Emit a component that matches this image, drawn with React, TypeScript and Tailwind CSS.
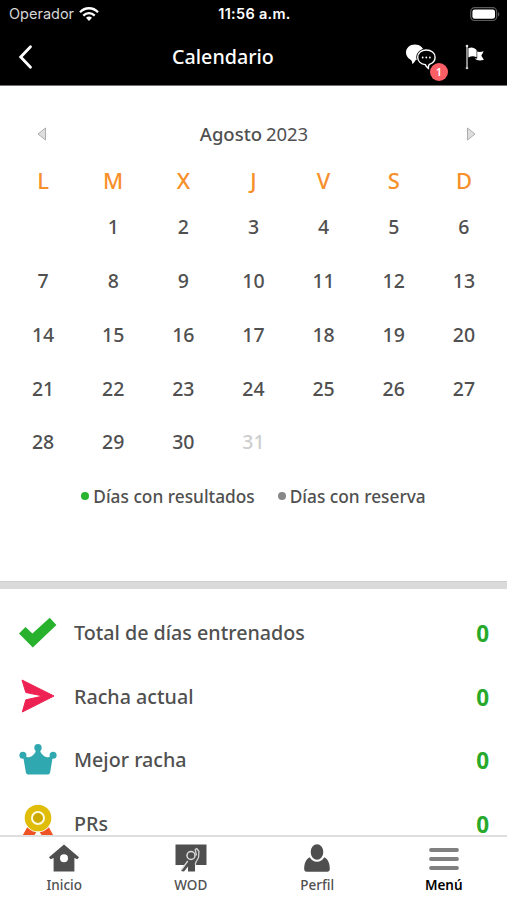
import type { ReactNode } from "react";

const weekDays = ["L", "M", "X", "J", "V", "S", "D"];

// August 2023 starts on a Tuesday
const days: (number | null)[] = [null, ...Array.from({ length: 31 }, (_, i) => i + 1)];
const today = 30;

const stats: { label: string; value: number; icon: ReactNode }[] = [
  { label: "Total de días entrenados", value: 0, icon: <CheckIcon /> },
  { label: "Racha actual", value: 0, icon: <SendIcon /> },
  { label: "Mejor racha", value: 0, icon: <CrownIcon /> },
  { label: "PRs", value: 0, icon: <MedalIcon /> },
];

const tabs: { label: string; icon: ReactNode; active?: boolean }[] = [
  { label: "Inicio", icon: <HomeIcon /> },
  { label: "WOD", icon: <BoardIcon /> },
  { label: "Perfil", icon: <UserIcon /> },
  { label: "Menú", icon: <MenuIcon />, active: true },
];

function WifiIcon() {
  return (
    <svg width="20" height="15" viewBox="0 0 20 15" fill="none" stroke="#fff" strokeWidth="2.3">
      <path d="M1 5.2C6-.1 14-.1 19 5.2" />
      <path d="M4.3 8.6c3.3-3.4 8.1-3.4 11.4 0" />
      <path d="M7 10.7c1.8-1.7 4.2-1.7 6 0l-3 3.2z" fill="#fff" stroke="none" />
    </svg>
  );
}

function BatteryIcon() {
  return (
    <svg width="30" height="15" viewBox="0 0 30 15">
      <rect x=".7" y=".7" width="26" height="12.8" rx="4" fill="none" stroke="#5c5c5c" strokeWidth="1.2" />
      <rect x="2.4" y="2.4" width="22.6" height="9.4" rx="2.4" fill="#fff" />
      <path d="M28 5v4.4c1.9-.8 1.9-3.6 0-4.4z" fill="#5c5c5c" />
    </svg>
  );
}

function ChatIcon() {
  return (
    <svg width="32" height="26" viewBox="0 0 32 26">
      <path
        d="M9.9.5C4.9.5 1 4 1 8.5c0 3 1.7 5.6 4.3 6.9 1.3.7 2 2 1.9 4.6 1.7-.8 2.6-2.400 3.400-3.900 5-.6 8.400-3.600 8.400-7.600C19 4 14.900.5 9.900.5z"
        fill="#fff"
      />
      <path
        d="M21.300 6c4.900 0 8.800 3.100 8.800 7.300 0 3.300-2.300 5.800-5.200 6.900-1.300.5-1.600 1.700-1.500 4.100-1.500-1-2.500-2.300-3.100-3.700-4.300-.5-7.600-3.300-7.600-7.300 0-4.200 3.700-7.300 8.600-7.300z"
        fill="#000"
        stroke="#000"
        strokeWidth="3"
      />
      <path
        d="M21.300 6c4.900 0 8.800 3.100 8.800 7.300 0 3.300-2.300 5.800-5.200 6.900-1.300.5-1.600 1.700-1.500 4.100-1.500-1-2.500-2.300-3.100-3.700-4.300-.5-7.600-3.300-7.600-7.300 0-4.200 3.700-7.300 8.600-7.300z"
        stroke="#fff"
        strokeWidth="1.400"
      />
      <g fill="#fff">
        <circle cx="17.700" cy="13.500" r=".9" />
        <circle cx="21.300" cy="13.500" r=".9" />
        <circle cx="24.900" cy="13.500" r=".9" />
      </g>
    </svg>
  );
}

function FlagIcon() {
  return (
    <svg width="20" height="26" viewBox="0 0 20 26">
      <path d="M2 2v22.500" stroke="#d4d4d4" strokeWidth="1.300" />
      <circle cx="2" cy="2" r="1.300" fill="#e5e5e5" />
      <circle cx="2" cy="24" r="1.300" fill="#c4c4c4" />
      <path d="M3.400 4.200c3-1.500 6-.7 8.200 1.800v7.300c-2.600-1.400-5.200-1.400-8.200.1z" fill="#fff" />
      <path d="M12.200 7.600c2 .6 4 .4 6.500-.3l-2.400 4.400 2.600 4c-3.600 1.300-7 1-9.200-1.200h2.500z" fill="#fff" />
    </svg>
  );
}

function CheckIcon() {
  return (
    <svg width="40" height="32" viewBox="0 0 40 32">
      <path d="M1 16.500 7.500 10l6.900 6.500L31.700.8l6.700 7.200-23.600 22.500z" fill="#27b12d" />
    </svg>
  );
}

function SendIcon() {
  return (
    <svg width="34" height="34" viewBox="0 0 34 34">
      <path d="M1 1 33 17 1.300 33l3.500-12.200L22 17 4.800 13.500z" fill="#ee2252" stroke="#ee2252" strokeLinejoin="round" />
    </svg>
  );
}

function CrownIcon() {
  return (
    <svg width="38" height="32" viewBox="0 0 38 32" fill="#30a8b0">
      <circle cx="19" cy="3.800" r="3.700" />
      <circle cx="3.900" cy="11.200" r="3.500" />
      <circle cx="34.100" cy="11.200" r="3.500" />
      <path d="M4 11.500c3.500 2.500 7 2 9.300.2C16.200 9.500 17 7.500 17 5h4c0 2.500.8 4.500 3.700 6.700 2.300 1.800 5.800 2.300 9.300-.2L31.200 28c-.3 1.900-1.300 2.500-3.200 2.500H10c-1.900 0-2.900-.6-3.200-2.500z" />
    </svg>
  );
}

function MedalIcon() {
  return (
    <svg width="34" height="38" viewBox="0 0 34 38">
      <path d="M8 20 .5 33.500l6-.5L9 38l7-11zM26 20l7.500 13.500-6-.5L25 38l-7-11z" fill="#f05323" />
      <circle cx="17" cy="14" r="14.300" fill="#fff" />
      <circle cx="17" cy="14" r="13.300" fill="#e0bd09" />
      <circle cx="17" cy="14" r="6" fill="#cda900" stroke="#fffbe0" strokeWidth="2" />
    </svg>
  );
}

function HomeIcon() {
  return (
    <svg width="32" height="28" viewBox="0 0 32 28">
      <path
        d="M16 .5 31 13.200l-1.600 2.100-3-1.200v13.400H5.600V14.100l-3 1.200L1 13.200zM16 10.300a4 4 0 1 0 0 8 4 4 0 0 0 0-8z"
        fill="#4f4f4f"
        fillRule="evenodd"
      />
    </svg>
  );
}

function BoardIcon() {
  return (
    <svg width="32" height="28" viewBox="0 0 32 28">
      <path d="M.5.500h31v20.500H.5z" fill="#4f4f4f" />
      {/* coach with a raised arm in front of the board */}
      <path
        d="M6 27l6.800-9.500 5.200-1 3.600-4.500-.6-7 2.500.5 1.300 6-3.300 7.500-1.500 2.500V27.500h-7v-5L9 27.500z"
        fill="#4f4f4f"
      />
      <path
        d="M6.200 26 12.800 17M21.500 11.500l-1.300-6 1.500-1 2.300 3-.5 6-3 5.500V21"
        fill="none"
        stroke="#d4d4d4"
        strokeWidth="1.300"
        strokeLinejoin="round"
      />
      <circle cx="16" cy="11.500" r="4" fill="#4f4f4f" stroke="#dedede" strokeWidth="1.500" />
    </svg>
  );
}

function UserIcon() {
  return (
    <svg width="26" height="28" viewBox="0 0 26 28" fill="#4f4f4f">
      <ellipse cx="13" cy="8" rx="6.300" ry="7.700" />
      <path d="M5.800 13.200c1.500 2.800 4 4.500 7.200 4.500s5.700-1.700 7.200-4.500c3.800 1.900 5.600 6 5.600 11.800 0 1.600-.9 2.700-2.500 2.700H2.700C1.100 27.700.2 26.600.2 25c0-5.800 1.800-9.900 5.600-11.800z" />
    </svg>
  );
}

function MenuIcon() {
  return (
    <svg width="30" height="24" viewBox="0 0 30 24" stroke="#808080" strokeWidth="3.800" strokeLinecap="round">
      <path d="M2 4h26M2 13h26M2 22h26" />
    </svg>
  );
}

function Header() {
  return (
    <header className="flex h-[86px] shrink-0 flex-col border-b border-[#77716f] bg-black text-white">
      <div className="grid h-7 grid-cols-[1fr_auto_1fr] items-center pl-[9px] pr-[7px] font-['Inter']">
        <div className="flex items-center gap-[5px]">
          <span className="text-[14.5px] text-[#d6d6d6]">Operador</span>
          <WifiIcon />
        </div>
        <span className="text-[14.5px] font-semibold tracking-[0.3px]">11:56 a.m.</span>
        <div className="flex justify-end">
          <BatteryIcon />
        </div>
      </div>
      <div className="grid h-[57px] grid-cols-[172px_auto_1fr] items-center">
        <button className="w-fit pl-[18px]" aria-label="Atrás">
          <svg width="16" height="26" viewBox="0 0 16 26" fill="none" stroke="#fff" strokeWidth="2.8" strokeLinecap="round">
            <path d="M12.5 2.800 2.700 13l9.800 10.200" />
          </svg>
        </button>
        <h1 className="text-[19.7px] font-medium">Calendario</h1>
        <div className="flex items-center justify-end gap-7 pr-[22px]">
          <div className="relative">
            <ChatIcon />
            <span className="absolute left-[25px] top-[19.5px] flex size-[18px] items-center justify-center rounded-full bg-[#fb5f65] text-[11px] font-semibold">
              1
            </span>
          </div>
          <FlagIcon />
        </div>
      </div>
    </header>
  );
}

function MonthArrow({ flip }: { flip?: boolean }) {
  return (
    <svg className={flip ? "rotate-180" : ""} width="10" height="14" viewBox="0 0 10 14">
      <path d="M8.500 1v12L1 7z" fill="#dedede" stroke="#adadad" strokeLinejoin="round" />
    </svg>
  );
}

function Calendar() {
  return (
    <section className="h-[495px] shrink-0 px-2 pt-[31px]">
      <div className="flex h-[34px] items-center justify-between pl-[29px] pr-[23px]">
        <MonthArrow />
        <h2 className="-ml-[5px] text-[18.5px] font-medium">
          Agosto <span className="-ml-px font-normal">2023</span>
        </h2>
        <MonthArrow flip />
      </div>
      <div className="grid h-[49px] grid-cols-7 items-center pt-2.5 text-center text-[22px] font-medium text-[#f7902b]">
        {weekDays.map((day) => (
          <span key={day}>{day}</span>
        ))}
      </div>
      <div className="grid auto-rows-[53.75px] grid-cols-7 items-center text-center text-[19.5px] font-medium">
        {days.map((day, i) => (
          <span key={i} className={day && day > today ? "text-[#cecece]" : ""}>
            {day}
          </span>
        ))}
      </div>
      <div className="flex items-center justify-center gap-[23px] pt-[15px] text-[17.3px] font-medium leading-[25px]">
        <span className="flex items-center gap-1">
          <i className="size-2 rounded-full bg-[#29b32f]" />
          Días con resultados
        </span>
        <span className="flex items-center gap-1">
          <i className="size-2 rounded-full bg-[#888]" />
          Días con reserva
        </span>
      </div>
    </section>
  );
}

export default function App() {
  return (
    <div className="flex h-[900px] w-full flex-col overflow-hidden bg-white font-['Noto_Sans',sans-serif] text-[#505050]">
      <Header />
      <main className="min-h-0 flex-1 overflow-hidden">
        <Calendar />
        <div className="h-2 border-t border-[#cecece] bg-[#dadada]" />
        <ul className="pt-3">
          {stats.map(({ label, value, icon }) => (
            <li key={label} className="flex h-[63.5px] items-center px-[18px]">
              <div className="flex w-10 justify-center">{icon}</div>
              <span className="flex-1 pl-4 pt-px text-[19.7px] font-medium leading-5">{label}</span>
              <span className="pt-[3px] text-[22.5px] font-bold leading-5 text-[#27aa2b]">{value}</span>
            </li>
          ))}
        </ul>
      </main>
      <nav className="grid h-[65px] shrink-0 grid-cols-4 border-t-2 border-[#dfdfdf] bg-white pl-px">
        {tabs.map(({ label, icon, active }) => (
          <button key={label} className="flex flex-col items-center pt-[7px]">
            <div className="flex h-7 items-center">{icon}</div>
            <span className={active ? "pt-[3px] text-[13.5px] font-semibold text-black" : "pt-[3px] text-[13.5px] font-medium"}>
              {label}
            </span>
          </button>
        ))}
      </nav>
    </div>
  );
}
